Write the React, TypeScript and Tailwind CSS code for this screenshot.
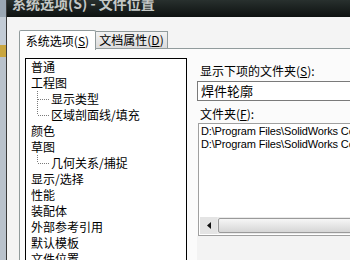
import React from "react";

const cjk = { fontFamily: '"Noto Sans CJK SC", "Noto Sans", sans-serif' };

function Conn({ last }: { last?: boolean }) {
  return (
    <svg width="13" height="16" className="shrink-0">
      <line x1="0.5" y1="0" x2="0.5" y2={last ? 8 : 16} stroke="#7a7a7a" strokeDasharray="1 1" />
      <line x1="1" y1="8.5" x2="13" y2="8.5" stroke="#7a7a7a" strokeDasharray="1 1" />
    </svg>
  );
}

function Item({ text }: { text: string }) {
  return <div className="h-[16px] leading-[16px] whitespace-nowrap">{text}</div>;
}

function Child({ text, last }: { text: string; last?: boolean }) {
  return (
    <div className="h-[16px] leading-[16px] whitespace-nowrap flex items-center pl-[6px]">
      <Conn last={last} />
      <span className="ml-[1px]">{text}</span>
    </div>
  );
}

export default function App() {
  return (
    <div className="w-[350px] h-[260px] overflow-hidden flex bg-[#f2f2f2] text-[12px] text-black" style={cjk}>
      <div className="w-[7px] shrink-0 flex flex-col bg-[#c3ccd6] border-r border-[#3a3a3a]">
        <div className="h-[17px] bg-[#9aa7b4]" />
        <div className="h-[28px]" />
        <div className="h-[12px] bg-[#c9a640]" />
        <div className="flex-1 bg-[#b9c2cc]" />
      </div>
      <div className="flex-1 flex flex-col min-w-0">
        <div className="h-[17px] shrink-0 bg-gradient-to-b from-[#28302e] to-[#0e1211] overflow-hidden pl-[5px]">
          <div className="text-[14px] font-bold leading-[14px] -mt-[4px] text-[#c4c8c6] whitespace-nowrap">
            系统选项(S) - 文件位置
          </div>
        </div>
        <div className="flex-1 pt-[12px] pl-[12px] flex flex-col bg-[#f4f4f4]">
          <div className="flex items-end h-[20px] shrink-0">
            <div className="w-[77px] h-[20px] bg-white border border-b-0 border-[#919b9c] rounded-t-[2px] flex items-center justify-center leading-none relative top-[1px] z-10">
              系统选项(<span className="underline">S</span>)
            </div>
            <div className="w-[72px] h-[18px] bg-gradient-to-b from-[#f2f2f2] to-[#dcdcdc] border border-l-0 border-[#919b9c] flex items-center justify-center leading-none">
              文档属性(<span className="underline">D</span>)
            </div>
            <div className="flex-1 h-[1px] bg-[#919b9c]" />
          </div>
          <div className="flex-1 border-l border-[#919b9c] bg-[#fbfbfb] pl-[5px] pt-[9px] flex gap-[10px]">
            <div className="w-[162px] shrink-0 border border-black border-b-0 bg-white pl-[5px] pt-0 flex flex-col">
              <Item text="普通" />
              <Item text="工程图" />
              <Child text="显示类型" />
              <Child text="区域剖面线/填充" last />
              <Item text="颜色" />
              <Item text="草图" />
              <Child text="几何关系/捕捉" last />
              <Item text="显示/选择" />
              <Item text="性能" />
              <Item text="装配体" />
              <Item text="外部参考引用" />
              <Item text="默认模板" />
              <Item text="文件位置" />
            </div>
            <div className="flex-1 flex flex-col min-w-0 pt-[4px]">
              <div className="h-[16px] leading-[16px] pl-[3px] mt-[1px] whitespace-nowrap">
                显示下项的文件夹(<span className="underline">S</span>):
              </div>
              <div className="mt-[2px] h-[20px] w-[170px] border border-[#7a7a7a] border-r-0 bg-white flex items-center pl-[3px] text-[13px] whitespace-nowrap">
                焊件轮廓
              </div>
              <div className="mt-[5px] h-[16px] leading-[16px] pl-[3px] whitespace-nowrap">
                文件夹(<span className="underline">F</span>):
              </div>
              <div className="mt-[1px] ml-[1px] h-[113px] w-[170px] border border-[#a0a0a0] border-r-0 bg-white flex flex-col">
                <div className="flex-1 pt-[1px] pl-[2px] text-[11px] leading-[13px] whitespace-nowrap tracking-[-0.15px]" style={{ fontFamily: '"Liberation Sans", Arial, sans-serif' }}>
                  <div>{"D:\\Program Files\\SolidWorks Corp\\SolidWorks\\lang"}</div>
                  <div>{"D:\\Program Files\\SolidWorks Corp\\SolidWorks\\data"}</div>
                </div>
                <div className="h-[17px] mb-[1px] ml-[1px] flex bg-[#eaeaea]">
                  <div className="w-[17px] h-[17px] flex items-center justify-center bg-[#e4e4e4]">
                    <svg width="6" height="7"><polygon points="5,0 5,7 1,3.5" fill="#111" /></svg>
                  </div>
                  <div className="flex-1 ml-[1px] my-[1px] rounded-[2px] border border-[#9a9a9a] bg-gradient-to-b from-[#f6f6f6] to-[#d6d6d6] flex items-center justify-end pr-[5px]">
                    <div className="flex gap-[2px]">
                      <div className="w-[1px] h-[7px] bg-[#8a8a8a]" />
                      <div className="w-[1px] h-[7px] bg-[#8a8a8a]" />
                      <div className="w-[1px] h-[7px] bg-[#8a8a8a]" />
                      <div className="w-[1px] h-[7px] bg-[#8a8a8a]" />
                    </div>
                  </div>
                </div>
              </div>
              <div className="flex-1 bg-[#f3f3f3]" />
            </div>
          </div>
        </div>
      </div>
    </div>
  );
}
